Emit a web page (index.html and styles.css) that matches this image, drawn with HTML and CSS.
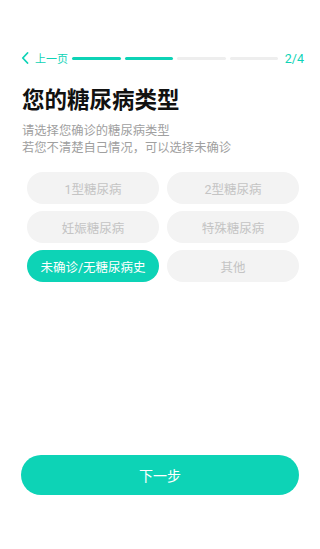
FILE: index.html
```html
<!DOCTYPE html>
<html lang="zh-CN">

<head>
  <meta charset="UTF-8">
  <meta name="viewport" content="width=device-width, initial-scale=1.0">
  <title>糖尿病类型</title>
  <link rel="stylesheet" href="styles.css">
</head>

<body>
<div class="page">
  <div class="topbar">
    <a class="back" href="#">
      <svg width="8" height="12" viewBox="0 0 8 12"><path d="M6.5 1 L1.8 6 L6.5 11" fill="none" stroke="#0dd3b6" stroke-width="1.8" stroke-linecap="round" stroke-linejoin="round"/></svg>
      <span>上一页</span>
    </a>
    <div class="progress">
      <span class="seg done"></span>
      <span class="seg done"></span>
      <span class="seg"></span>
      <span class="seg"></span>
    </div>
    <span class="step">2/4</span>
  </div>

  <h1>您的糖尿病类型</h1>
  <p class="hint">请选择您确诊的糖尿病类型<br>若您不清楚自己情况，可以选择未确诊</p>

  <div class="options">
    <button class="chip">1型糖尿病</button>
    <button class="chip">2型糖尿病</button>
    <button class="chip">妊娠糖尿病</button>
    <button class="chip">特殊糖尿病</button>
    <button class="chip active">未确诊/无糖尿病史</button>
    <button class="chip">其他</button>
  </div>

  <div class="footer">
    <button class="next">下一步</button>
  </div>
</div>
</body>

</html>
```

FILE: styles.css
```css
body {
  font-family: Roboto, "Noto Sans CJK SC", sans-serif;
  background-color: white;
  color: #111;
  margin: 0;
  padding: 0;
}

.page {
  height: 549px;
  display: flex;
  flex-direction: column;
  padding: 0 21px 0 21px;
  box-sizing: border-box;
}

.topbar {
  display: flex;
  align-items: center;
  margin: 50px -5px 0 0;
  height: 16px;
}

.back {
  display: flex;
  align-items: center;
  gap: 6px;
  color: #0dd3b6;
  font-size: 11px;
  text-decoration: none;
}

.progress {
  flex: 1;
  display: flex;
  gap: 4px;
  margin: 0 6px 0 4px;
}

.seg {
  flex: 1;
  height: 3px;
  border-radius: 2px;
  background-color: #eeeeee;
}

.seg.done {
  background-color: #0dd3b6;
}

.step {
  color: #0dd3b6;
  font-size: 12.5px;
  width: 20px;
  text-align: right;
}

h1 {
  font-size: 22.5px;
  font-weight: bold;
  margin: 19px 0 0 1px;
  line-height: 30px;
  color: #111;
}

.hint {
  margin: 8px 0 0 1px;
  font-size: 12.3px;
  line-height: 17px;
  color: #a0a0a0;
}

.options {
  display: grid;
  grid-template-columns: 1fr 1fr;
  gap: 7px 8px;
  margin: 15px 0 0 0;
  padding: 0 0 0 6px;
}

.chip {
  height: 32px;
  border: none;
  border-radius: 16px;
  background-color: #f3f3f3;
  color: #c4c4c4;
  font-family: inherit;
  font-size: 12.5px;
  padding: 0;
}

.chip.active {
  background-color: #0dd3b6;
  color: white;
}

.footer {
  margin-top: auto;
  padding-bottom: 54px;
}

.next {
  width: 100%;
  height: 40px;
  border: none;
  border-radius: 20px;
  background-color: #0dd3b6;
  color: white;
  font-family: inherit;
  font-size: 14px;
}
```
